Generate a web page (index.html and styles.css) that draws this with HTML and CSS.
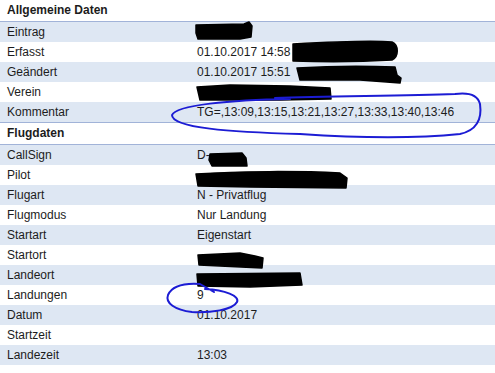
FILE: index.html
```html
<!DOCTYPE html>
<html lang="de">
<head>
<meta charset="utf-8">
<title>Flugdaten</title>
<link rel="stylesheet" href="styles.css">
</head>
<body>
<div class="page">
  <section class="section first">
    <div class="section-head">Allgemeine Daten</div>
    <div class="rows">
      <div class="row"><div class="label">Eintrag</div><div class="value"></div></div>
      <div class="row"><div class="label">Erfasst</div><div class="value">01.10.2017 14:58</div></div>
      <div class="row"><div class="label">Geändert</div><div class="value">01.10.2017 15:51</div></div>
      <div class="row"><div class="label">Verein</div><div class="value"></div></div>
      <div class="row"><div class="label">Kommentar</div><div class="value">TG=,13:09,13:15,13:21,13:27,13:33,13:40,13:46</div></div>
    </div>
  </section>
  <section class="section">
    <div class="section-head">Flugdaten</div>
    <div class="rows">
      <div class="row"><div class="label">CallSign</div><div class="value">D-</div></div>
      <div class="row"><div class="label">Pilot</div><div class="value"></div></div>
      <div class="row"><div class="label">Flugart</div><div class="value">N - Privatflug</div></div>
      <div class="row"><div class="label">Flugmodus</div><div class="value">Nur Landung</div></div>
      <div class="row"><div class="label">Startart</div><div class="value">Eigenstart</div></div>
      <div class="row"><div class="label">Startort</div><div class="value"></div></div>
      <div class="row"><div class="label">Landeort</div><div class="value"></div></div>
      <div class="row"><div class="label">Landungen</div><div class="value">9</div></div>
      <div class="row"><div class="label">Datum</div><div class="value">01.10.2017</div></div>
      <div class="row"><div class="label">Startzeit</div><div class="value"></div></div>
      <div class="row"><div class="label">Landezeit</div><div class="value">13:03</div></div>
    </div>
  </section>

  <svg class="marks" width="495" height="373" viewBox="0 0 495 373" aria-hidden="true">
    <g class="redact">
      <path d="M196 25 L244 24 L249 22 L252 26 L251 37 L240 39 L198 39 L196 33 Z"/>
      <path d="M293 44 C330 42 370 40 392 42 C399 45 399 57 392 60 C360 62 320 62 293 61 Z"/>
      <path d="M297 68 C330 66 370 66 395 67 L397 75 L401 78 L400 83 L360 80 L300 80 Z"/>
      <path d="M197 87 L230 85 L290 86 L330 88 L331 99 L280 100 L200 100 Z"/>
      <path d="M210 154 L242 153 L246 158 L247 166 L212 166 L209 160 Z"/>
      <path d="M196 174 C240 171 300 171 340 173 L347 178 L346 188 L250 187 L198 186 Z"/>
      <path d="M198 255 L240 253 L255 256 L263 258 L262 268 L220 266 L199 265 Z"/>
      <path d="M197 274 L300 273 L302 285 L250 287 L198 286 Z"/>
    </g>
    <g class="circle">
      <path d="M290 99 C230 100 176 105 172 115 C172 128 230 132 300 134 C360 138 420 138 460 134 C478 130 482 118 480 104 C478 96 470 92 455 94 C400 96 330 96 275 98"/>
      <path d="M205 289 C225 290 240 296 237 302 C233 310 210 313 192 312 C175 310 165 303 168 295 C172 286 185 283 200 284 L214 292"/>
    </g>
  </svg>
</div>
</body>
</html>
```
FILE: styles.css
```css
html, body {
  margin: 0;
  padding: 0;
  background: #ffffff;
}

.page {
  position: relative;
  width: 495px;
  font-family: "Liberation Sans", Arial, sans-serif;
  font-size: 12px;
  color: #1c1c1c;
}

.section {
  display: flex;
  flex-direction: column;
}

.section.first {
  border-bottom: 1px solid #a1b3d8;
}

.section-head {
  height: 21px;
  line-height: 21px;
  padding-left: 7px;
  font-weight: bold;
  border-bottom: 1px solid #a1b3d8;
}

.rows {
  display: flex;
  flex-direction: column;
}

.row {
  display: grid;
  grid-template-columns: 190px 1fr;
  height: 20px;
  line-height: 20px;
}

.row:nth-child(odd) {
  background: #dee7f3;
}

.label,
.value {
  padding-left: 7px;
  white-space: nowrap;
}

.marks {
  position: absolute;
  left: 0;
  top: 0;
  pointer-events: none;
}

.redact path {
  fill: #000000;
  stroke: #000000;
  stroke-width: 1.5;
  stroke-linejoin: round;
}

.circle path {
  fill: none;
  stroke: #1c1cd4;
  stroke-width: 2;
  stroke-linecap: round;
  stroke-linejoin: round;
}
```
